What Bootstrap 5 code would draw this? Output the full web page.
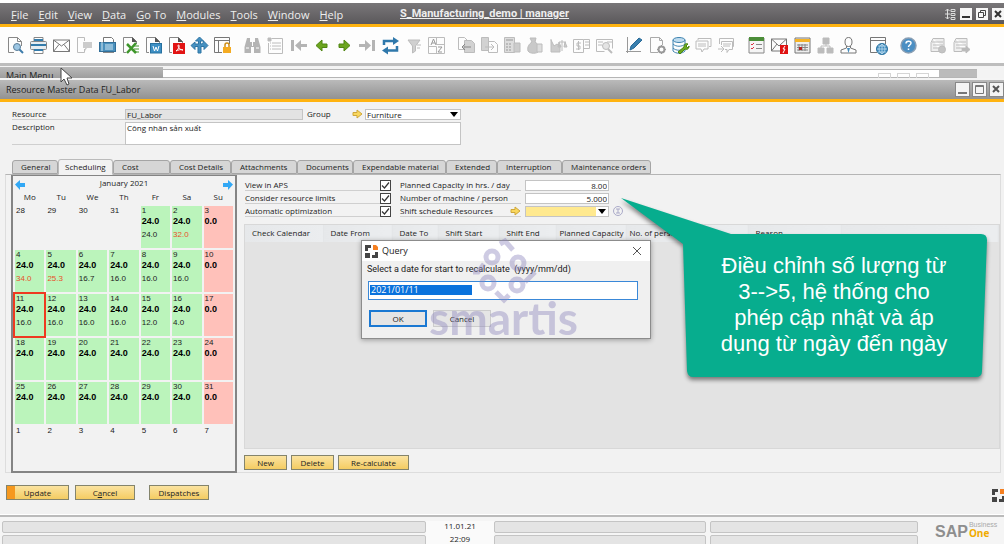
<!DOCTYPE html>
<html lang="vi">
<head>
<meta charset="utf-8">
<meta name="viewport" content="width=device-width, initial-scale=1">
<title>S_Manufacturing_demo | manager</title>
<link href="https://cdn.jsdelivr.net/npm/bootstrap@5.3.0/dist/css/bootstrap.min.css" rel="stylesheet">
<script defer src="https://cdn.jsdelivr.net/npm/bootstrap@5.3.0/dist/js/bootstrap.bundle.min.js"></script>
<style>
body{font:8px/10px "Open Sans","Noto Sans",sans-serif;color:#222;background:#fff;height:100vh;overflow:hidden}
a{color:inherit}
.menubar{height:21px;margin-top:3px;background:linear-gradient(#797779,#5b585b);color:#eee;font-size:11px;line-height:21px;box-sizing:content-box;border-bottom:3px solid #ffb310}
.menubar .left-menu{width:400px;padding-left:11px;gap:10px;padding-top:1px}
.menubar .left-menu a{text-decoration:none}
.menubar .left-menu a::first-letter{text-decoration:underline}
.app-name{font:bold 11px/21px Roboto,sans-serif;color:#eee}
.winbtn{width:12px;height:12px;padding:0;border:0;background:#f6f6f6;display:block;line-height:0}
.toolbar{height:36px;padding-left:7px;gap:13px;background:#fdfdfd}
.toolbar .tool-set{gap:6px}
.toolbar button{width:17px;height:17px;padding:0;border:0;background:none;line-height:0}
.toolbar svg{width:17px;height:17px;fill:none;stroke:#bcbcbc;overflow:visible}
.back-windows{height:17px;border-top:3px solid #bdbdbd;background:#f3f3f3;border-bottom:2px solid #f4f4f4;overflow:hidden}
.main-menu{width:163px;font-size:9px;line-height:18px;padding-left:6px;background:linear-gradient(#b9b9b9,#9b9b9b);height:12px;margin-top:1px;overflow:hidden}
.back-form{margin:3px 27px 0 0;border-top:1px solid #b5b5b5;border-bottom:1px solid #b5b5b5;gap:6px;padding:3px 0 0;background:linear-gradient(90deg,#fff 0 776px,#bbb 776px 814px,#f3f3f3 814px)}
.ghost{width:13px;height:12px;border:1px solid #d5d5d5}
.titlebar{height:22px;background:linear-gradient(#bababa,#929292);border-bottom:3px solid #ffb310;font-size:9px;padding-left:6px}
.titlebar .winbtn{width:15px;height:15px;border:1px solid #888;background:#f4f4f4}
.work{background:#f2f2f2;min-height:0}
.head-form{display:grid;grid-template-columns:113px 178px 49px 13px 96px;row-gap:2px;padding:7px 12px 0;height:57px;align-content:start}
.rule{border-bottom:1px solid #cfcfcf}
.field{font:inherit;line-height:9px;border:1px solid #c4c4c4;background:#fff;padding:0 1px;border-radius:0;color:#222;height:11px;min-width:0;display:block;outline:0}
textarea.field{height:23px;resize:none;overflow:hidden;grid-column:2/6}
.pick{position:relative;display:block}
.pick select{appearance:none;width:100%}
.pick svg{position:absolute;right:2px;top:3px;pointer-events:none}
.tabs{display:grid;grid-template-columns:46px 55px 57px 61px 66px 56px 93px 51px 65px 89px;padding-left:12px;border:0;height:15px;position:relative;z-index:1}
.tabs .nav-link{font:inherit;width:100%;height:14px;margin:1px 0 0;padding:0 0 2px 8px;text-align:left;line-height:11px;color:#222;background:#d6d6d6;border:1px solid #a5a5a5;border-radius:3px 3px 0 0;white-space:nowrap}
.tabs .nav-link.active{margin:0;height:16px;padding:0 0 2px 6px;background:#f2f2f2;border-color:#bbb;border-bottom-color:#f2f2f2;color:#222}
.panel{border:1px solid #ddd;border-top-color:#b5b5b5;margin:0 3px 0 5px;height:299px;padding:0 0 0 5px;gap:7px}
.calbox{width:226px;height:298px;border:2px solid #848484;border-top-width:1px;flex:none;padding-top:2px}
.calbox .cal-nav{height:12px;padding:0 2px;font-size:8px}
.calbox button{border:0;background:none;padding:0;line-height:0}
.days{width:100%;table-layout:fixed;border-collapse:separate;border-spacing:2px;font:8px/10px "Liberation Sans",sans-serif}
.days th{font:8px/10px "Open Sans",sans-serif;text-align:center;vertical-align:top;padding:0;height:12px}
.days td{height:42px;padding:0 1px;vertical-align:top}
.days b{display:block;font-size:9px;line-height:10px;color:#000}
.days i{display:block;font-style:normal;margin-top:3px;line-height:11px}
.days .work-day{background:#bbf4bb}
.days .free{background:#ffc1ba}
.days .over{color:#e8502a}
.days .today{outline:2px solid #ee3a20;outline-offset:0}
.options{display:grid;grid-template-columns:135px 20px 125px 84px 16px;grid-auto-rows:11px;row-gap:2px;padding:5px 0 0 1px}
.tick{appearance:none;width:11px;height:11px;border:1px solid #444;background:#fff;margin:0;display:block}
.tick:checked{background:#fff url("data:image/svg+xml,%3Csvg xmlns='http://www.w3.org/2000/svg' viewBox='0 0 9 9'%3E%3Cpath d='M1 4.500L3.500 7L8 1.500' fill='none' stroke='%23333' stroke-width='1.200'/%3E%3C/svg%3E")}
.gridbox{background:#e3e3e3;border:1px solid #d8d8d8;height:225px;margin-top:7px;overflow:hidden}
.shifts{table-layout:fixed;width:100%;border-collapse:collapse}
.shifts th{font-weight:400;line-height:10px;height:17px;padding:0 0 2px 7px;border-right:1px solid #e4e6e8;background:linear-gradient(90deg,#e6e8ea,#ebedef);white-space:nowrap}
.shifts .snug{padding-left:3px}
.row-actions{gap:4px;margin-top:6px}
.gold{font:inherit;height:15px;padding:0;border:1px solid #84846c;border-radius:0;background:linear-gradient(#fbe3a0,#f4cc62);color:#222;text-align:center;line-height:12px}
.primary-gold{background:linear-gradient(90deg,#f6981e 8px,transparent 8px),linear-gradient(#fbe3a0,#f4cc62)}
.form-actions{padding:12px 0 0 6px;gap:6px}
.statusbar{height:30px;border-top:1px solid #fff;background:#f5f5f5;box-shadow:inset 0 2px #bbb;padding:6px 0 0 2px;display:grid;grid-template-columns:424fr 68fr 212fr 4px 208fr 86px;overflow:hidden}
.statusbar .slot{height:12px;border:1px solid #c4c4c4;background:#e4e4e4;border-radius:2px;margin-bottom:2px}
.statusbar time{display:block;text-align:center;height:13px;line-height:10px}
.clock{background:#fafafa}
.query{position:absolute;left:361px;top:138px;width:290px;height:99px;background:#f0f0f0;border:1px solid #8c8c8c;box-shadow:0 1px 5px #0005;z-index:3}
.query header{background:#fff;height:20px;font-size:9px;padding:0 8px 0 3px}
.query label{font:9px/12px "Roboto",sans-serif;padding:2px 0 0 5px;display:block}
.query input{margin:6px 0 0 6px;width:270px;height:19px;border:1px solid #3a88d8;border-radius:0;background:linear-gradient(#0a72dc,#0a72dc) 1px 3px/102px 10px no-repeat #fff;color:#fff;padding:0 2px 2px;font:9px/12px "Open Sans",sans-serif;outline:0}
.query .choices{padding:10px 0 0 7px;gap:6px}
.query .choice{width:58px;height:17px;padding:0;border:1px solid #ccc;background:#e5e5e5;font:8px/13px "Open Sans",sans-serif;color:#222}
.query .choice.default-choice{border:2px solid #1a78d2}
.watermark{position:absolute;left:429px;top:136px;width:150px;z-index:4;color:#8d86bd;opacity:.42;pointer-events:none}
.watermark svg{overflow:visible}
.watermark span{display:block;font:700 46px/50px Lato,sans-serif}
.callout{position:absolute;left:621px;top:96px;width:366px;height:184px;z-index:5}
.callout svg{position:absolute;inset:0;overflow:visible;filter:drop-shadow(0 3px 2px #0007)}
.callout p{position:absolute;left:90px;top:55px;width:246px;margin:0;text-align:center;color:#fff;font:22px/26px "Liberation Sans",sans-serif;white-space:nowrap}
.pointer{position:absolute;left:60px;top:67px;z-index:9}
.sap{font-family:"Liberation Sans",sans-serif;padding-left:17px;gap:1px}
.sap strong{font-size:16px;line-height:22px;color:#8e8e8e}
.sap small{font-size:7px;line-height:8px;color:#aaa}
.sap small b{display:block;font:bold 10px/9px "Open Sans",sans-serif;color:#f0ab00}
.w43{width:43px}.w71{width:71px}.w60{width:60px}.w63{width:63px}
</style>
</head>
<body class="d-flex flex-column">
<nav class="menubar d-flex flex-shrink-0">
 <div class="left-menu d-flex">
  <a class="d-block" href="#">File</a><a class="d-block" href="#">Edit</a><a class="d-block" href="#">View</a><a class="d-block" href="#">Data</a><a class="d-block" href="#">Go To</a><a class="d-block" href="#">Modules</a><a class="d-block" href="#">Tools</a><a class="d-block" href="#">Window</a><a class="d-block" href="#">Help</a>
 </div>
 <a class="app-name" href="#">S_Manufacturing_demo | manager</a>
 <div class="ms-auto d-flex align-items-center gap-1">
  <svg width="11" height="12" fill="none" stroke="#ddd"><path d="M2.500 1v10M.5 3l2-2 2 2M.5 9l2 2 2-2M0 6h5M6 1.500h4v2H6zM6 5.500h4v2H6zM6 9.500h4v2H6z"/></svg>
  <button class="winbtn" aria-label="Minimize"><svg width="12" height="12"><path d="M2 8h8v2H2z" fill="#333"/></svg></button>
  <button class="winbtn" aria-label="Restore"><svg width="12" height="12" fill="none" stroke="#444"><path d="M4.500 4V2.500h5v5H8M2.500 4.500h5v5h-5z"/></svg></button>
  <button class="winbtn" aria-label="Close"><svg width="12" height="12" stroke="#333" stroke-width="2"><path d="M3 3l6 6M9 3l-6 6"/></svg></button>
 </div>
</nav>
<div class="toolbar d-flex align-items-center flex-shrink-0">
 <div class="tool-set d-flex">
  <button aria-label="Preview"><svg viewBox="0 0 17 17"><path d="M7 15.500H1.500V.5h9l4 4V9M10.500.5v4h4" stroke="#888"/><circle cx="10" cy="10" r="3.500" fill="#9dc7e4" stroke="#587c98"/><path d="M12.500 12.500l3.500 3.500" stroke="#3d7cab" stroke-width="2"/></svg></button>
  <button aria-label="Print"><svg viewBox="0 0 17 17"><path d="M4 5V.5h9V5M4 11v5.500h9V11" fill="#fff" stroke="#888"/><rect x=".5" y="4.500" width="16" height="8" rx="1" fill="#e8eef2" stroke="#888"/><path d="M1 7h15v2H1zM4 2h9v2H4zM4 12h9v2H4z" fill="#357cab" stroke="none"/></svg></button>
  <button aria-label="Mail"><svg viewBox="0 0 17 17"><path d="M.5 3h16v11.500H.5zM.5 3L8.500 9l8-6M.5 14.500L6 7.500M16.500 14.500L11 7.500" stroke="#777"/></svg></button>
  <button aria-label="SMS"><svg viewBox="0 0 17 17"><path d="M8.500 4V.5h-7v15h7V12"/><path d="M7 5h9v6h-5l-2 3v-3H7z" fill="#ccc" stroke="none"/></svg></button>
  <button aria-label="Fax"><svg viewBox="0 0 17 17"><path d="M4.500 5V.5h8l2 2V5" fill="#fff" stroke="#777"/><rect x=".5" y="5.500" width="16" height="9" fill="#4b91bd" stroke="#326f99"/><path d="M3 5v9M6 8h8M6 10h8M6 12h8" stroke="#d3e8f4"/><path d="M4 15.500h11" stroke="#888"/></svg></button>
  <button aria-label="Export to Excel"><svg viewBox="0 0 17 17"><path d="M4 15.500H1.500V.5h9l4 4V7" stroke="#888"/><path d="M10 0v5h5z" fill="#555" stroke="none"/><path d="M5 7l9 9M14 6l-9 10" stroke="#3e962b" stroke-width="2.500"/><path d="M12 9h5M12 12h5M12 15h5" stroke="#3e962b"/></svg></button>
  <button aria-label="Export to Word"><svg viewBox="0 0 17 17"><path d="M4 15.500H1.500V.5h9l4 4V7" stroke="#888"/><path d="M10 0v5h5z" fill="#555" stroke="none"/><rect x="5.500" y="6.500" width="11" height="9.500" fill="#3d8fc4" stroke="#26709f"/><path d="M8 9l1.500 5 1.500-4 1.500 4L14 9" stroke="#fff"/></svg></button>
  <button aria-label="Export to PDF"><svg viewBox="0 0 17 17"><path d="M4 15.500H1.500V.5h9l4 4V7" stroke="#888"/><path d="M10 0v5h5z" fill="#555" stroke="none"/><path d="M5 6h12v11H5z" fill="#e21414" stroke="none"/><path d="M8 14c3-2 4-6 2.500-6S11 13 15 13c-2-1-5 0-7 1" stroke="#fff"/></svg></button>
  <button aria-label="Launch application"><svg viewBox="0 0 17 17"><path d="M8.500 0l4 4h-3v3c2 0 3-1 3-3l4.500 4.500-4 4v-3H10v6.500H7V9.500H4v3l-4-4L4 5v2h3.500V4h-3z" fill="#4590c0" stroke="#2d74a4"/></svg></button>
  <button aria-label="Lock screen"><svg viewBox="0 0 17 17"><path d="M8 15.500H.5V.5h15V7M.5 3.500h15M4.500 4v11" stroke="#777"/><path d="M11 10V8a2 2 0 014 0v2" stroke="#ce8d16" stroke-width="1.500"/><path d="M9 10h8v6H9z" fill="#f4ab22" stroke="none"/></svg></button>
 </div>
 <div class="tool-set d-flex">
  <button aria-label="Find"><svg viewBox="0 0 17 17"><path d="M3 1h3v4h5V1h3l2.500 9v6H10v-6H7v6H.5v-6z" fill="#b4b4b4" stroke="none"/><path d="M2 11h3M12 11h3M8.500 5v4" stroke="#fff"/></svg></button>
  <button aria-label="Add"><svg viewBox="0 0 17 17"><path d="M4.500 1.500h11v15h-14V6M5 6h9M5 9h9M5 12h9M3 6h1M3 9h1M3 12h1"/><path d="M1 1h3v3H1z" fill="#bbb"/></svg></button>
  <button aria-label="First record"><svg viewBox="0 0 17 17"><path d="M1 3h3v11H1zM17 7v3h-6v4L5 8.500 11 3v4z" fill="#b4b4b4" stroke="none"/></svg></button>
  <button aria-label="Previous record"><svg viewBox="0 0 17 17"><path d="M14 7v3.500H9V14L3 8.500 9 3v4z" fill="#6ca51f" stroke="#4f8510"/></svg></button>
  <button aria-label="Next record"><svg viewBox="0 0 17 17"><path d="M3 7v3.500h5V14l6-5.500L8 3v4z" fill="#6ca51f" stroke="#4f8510"/></svg></button>
  <button aria-label="Last record"><svg viewBox="0 0 17 17"><path d="M13 3h3v11h-3zM0 7v3h6v4l6-5.500L6 3v4z" fill="#b4b4b4" stroke="none"/></svg></button>
  <button aria-label="Refresh"><svg viewBox="0 0 17 17"><path d="M2 8V4h10M15 9v4.500H5" stroke="#2f78ab" stroke-width="2.500"/><path d="M11 0l6 4-6 4zM6 9.500v8l-6-4z" fill="#2f78ab" stroke="none"/></svg></button>
  <button aria-label="Filter"><svg viewBox="0 0 17 17"><path d="M3 3h12l-4.500 6v5l-3 2V9z" fill="#d0d0d0"/><path d="M12 8h4M12 11h3"/></svg></button>
  <button aria-label="Sort"><svg viewBox="0 0 17 17"><path d="M.5.5h16v16H.5zM8.500.5v7h8M.5 9.500h8v7"/><path d="M3 8l2.500-6L8 8M4 6h3M10 10h4l-4 5h4" stroke="#999"/></svg></button>
 </div>
 <div class="tool-set d-flex">
  <button aria-label="Base document"><svg viewBox="0 0 17 17"><path d="M8 12.500H.5V.5h6l3 3V5"/><path d="M6.500 3.500h7l3 3v9h-10z" fill="#d2d2d2"/><path d="M13 10H4M7 7l-3 3 3 3" stroke="#888"/></svg></button>
  <button aria-label="Target document"><svg viewBox="0 0 17 17"><path d="M.5.500h7v13h-7z" fill="#d2d2d2"/><path d="M7.500 4.500h6l3 3v8h-9zM4 10h9M10 7l3 3-3 3"/></svg></button>
  <button aria-label="Gross profit"><svg viewBox="0 0 17 17"><path d="M.5.5h10v15H.5z" fill="#ddd"/><path d="M2 3h7M2 7h2M5 7h2M2 10h2M5 10h2M2 13h2M5 13h2" stroke="#999"/><path d="M10 6h6v9h-6z" fill="#ccc"/></svg></button>
  <button aria-label="Payment means"><svg viewBox="0 0 17 17"><path d="M5 5L3 1h6L8 5c3 2 5 5 4 9-2 3-9 3-11 0-1-4 1-7 4-9z" fill="#c9c9c9"/><path d="M10 7h5v8h-5z" fill="#ddd"/></svg></button>
  <button aria-label="Volume and weight"><svg viewBox="0 0 17 17"><path d="M1 2v13h9V9L7 7 4 9 1 3M12 3v11M9 5h7M9 5l-1 5h3zM15 5l-1 5h3z" fill="#ccc"/></svg></button>
  <button aria-label="Transaction journal"><svg viewBox="0 0 17 17"><path d="M.5 2.500h10v13H.5zM10.500 2.500h6v9h-6M5.500 4v9M8 6H4v3h3v3H3M12 5h4M12 8h4"/></svg></button>
  <button aria-label="Cost preview"><svg viewBox="0 0 17 17"><path d="M.5 2.500h16v9M.5 2.500v12h8M2 5h5M2 8h4M11 5h5"/><circle cx="10" cy="9" r="3.500" fill="#e4e4e4"/><path d="M12 12l4 4" stroke-width="2"/></svg></button>
 </div>
 <div class="tool-set d-flex">
  <button aria-label="Edit layout"><svg viewBox="0 0 17 17"><path d="M1.500 0v16M0 14.500h15" stroke="#999"/><path d="M4 13l1-4 8-8 3 2-8 8z" fill="#397fae" stroke="#286a98"/></svg></button>
  <button aria-label="Form settings"><svg viewBox="0 0 17 17"><path d="M9 15.500H1.500V.5h9l3 3V8M10.500.5v3h3" stroke="#aaa"/><circle cx="12.500" cy="12.500" r="3" stroke="#999" stroke-width="2"/><path d="M12.500 8v2M12.500 15v2M8 12.500h2M15 12.500h2" stroke="#999"/></svg></button>
  <button aria-label="Query manager"><svg viewBox="0 0 17 17"><ellipse cx="7" cy="3" rx="6" ry="2.500" fill="#bfdcef" stroke="#3e83b0"/><path d="M1 3v11c3 3 9 3 12 0V3M1 7c3 3 9 3 12 0M1 11c3 3 9 3 12 0" stroke="#3e83b0"/><path d="M6 15l6-5c0-3 2-4 4-3l-2 2 2 2 1-2c0 3-2 4-4 3l-5 5z" fill="#6eaa20" stroke="#498513"/></svg></button>
  <button aria-label="Messages"><svg viewBox="0 0 17 17"><path d="M3 3V1.500h13v8h-2M1 4h12v8H9l-2 3-1-3H1zM3 7h8M3 9h8"/></svg></button>
  <button aria-label="Activities"><svg viewBox="0 0 17 17"><path d="M1.500 7V1.500h14v8H14M3.500 8V4.500h11v8H11l-2 3v-3H7M5 7h8M5 9h7M0 12h6M3 9l3 3-3 3"/></svg></button>
 </div>
 <div class="tool-set d-flex">
  <button aria-label="My activities"><svg viewBox="0 0 17 17"><path d="M1 1h15v15H1z" stroke="#888" fill="#f5f5f5"/><path d="M1 0h15v4H1z" fill="#4c8e39" stroke="none"/><path d="M3 7l1 1 2-2M3 11l1 1 2-2" stroke="#d34"/><path d="M8 7.500h6M8 11.500h6" stroke="#888"/></svg></button>
  <button aria-label="Alerts"><svg viewBox="0 0 17 17"><path d="M.5 2h15v12H.5zM.5 2l7.500 7 7.500-7M.5 14L6 7" stroke="#777"/><path d="M9 8h8v9H9z" fill="#e01212" stroke="none"/><path d="M14 9l-2 3h2l-2 4" stroke="#fff"/></svg></button>
  <button aria-label="Calendar"><svg viewBox="0 0 17 17"><path d="M1 1h15v15H1z" fill="#eee" stroke="#777"/><path d="M1 2h15v3H1z" fill="#f5b427" stroke="none"/><path d="M3 8h11M3 10.500h11M3 13h11M5 7v7M8 7v7M11 7v7" stroke="#888"/><path d="M5 10h3v3H5z" fill="#b52323" stroke="none"/></svg></button>
  <button aria-label="Organization"><svg viewBox="0 0 17 17"><path d="M6 1h6v6H6zM1 11h6v5H1zM10 11h6v5h-6z" fill="#bcbcbc"/><path d="M4 11V9h9v2M9 7v2"/></svg></button>
  <button aria-label="Contacts"><svg viewBox="0 0 17 17"><ellipse cx="8.500" cy="5" rx="3.500" ry="4.500" stroke="#777"/><path d="M6.500 9v2L1 13v3h15v-3l-5.500-2V9" stroke="#777"/><path d="M7 11h3l-1.500 5z" fill="#438bbb" stroke="none"/></svg></button>
 </div>
 <div class="tool-set d-flex"><button aria-label="Web browser"><svg viewBox="0 0 17 17"><path d="M7 15.500H.5V.5h15V7M.5 3.500h15" stroke="#777"/><circle cx="12" cy="12" r="5.500" fill="#3f8bbd" stroke="#28719f"/><path d="M12 7v10M7 12h10M8 9h8M8 15h8M12 7c-4 3-4 7 0 10M12 7c4 3 4 7 0 10" stroke="#cde6f5" stroke-width=".7"/></svg></button></div>
 <div class="tool-set d-flex"><button aria-label="Help"><svg viewBox="0 0 17 17"><circle cx="8.500" cy="8.500" r="7.500" fill="#4c8fc3" stroke="#8a9fb4" stroke-width="1.500"/><path d="M6 6.500c0-3 5-3 5-.5 0 2-2.500 2-2.500 4M8.500 11.500v1.500" stroke="#fff" stroke-width="1.500"/></svg></button></div>
 <div class="tool-set d-flex">
  <button aria-label="Start recording"><svg viewBox="0 0 17 17"><path d="M3 1.500h11v9M3 1.500l-2 4v9h8M2 5h11M3 8h10M3 11h6" fill="#eee"/><circle cx="12" cy="12.500" r="3.500" fill="#c4c4c4"/></svg></button>
  <button aria-label="Replay recording"><svg viewBox="0 0 17 17"><path d="M3 1.500h11v9M3 1.500l-2 4v9h8M2 5h11M3 8h10M3 11h6" fill="#eee"/><path d="M9 11h4V9l4 3.500-4 3.500v-2H9z" fill="#bbb"/></svg></button>
 </div>
</div>
<div class="back-windows d-flex flex-shrink-0">
 <div class="main-menu">Main Menu</div>
 <div class="back-form flex-grow-1 d-flex justify-content-end pe-5"><span class="ghost"></span><span class="ghost"></span><span class="ghost"></span></div>
</div>
<div class="titlebar d-flex align-items-center flex-shrink-0">
 <span>Resource Master Data FU_Labor</span>
 <div class="ms-auto d-flex" style="gap:2px">
  <button class="winbtn" aria-label="Minimize form"><svg width="13" height="13"><path d="M2 9h9v2H2z" fill="#777"/></svg></button>
  <button class="winbtn" aria-label="Maximize form"><svg width="13" height="13" fill="none" stroke="#777"><path d="M2.500 2.500h8v8h-8zM2 3.500h8"/></svg></button>
  <button class="winbtn" aria-label="Close form"><svg width="13" height="13" stroke="#555" stroke-width="2"><path d="M3 3l6 6M9 3l-6 6"/></svg></button>
 </div>
</div>
<main class="work flex-grow-1 position-relative">
 <form class="head-form">
  <label class="rule" for="res">Resource</label>
  <input class="field" id="res" value="FU_Labor" style="background:#e3e3e3">
  <label class="ps-1" for="grp">Group</label>
  <svg width="11" height="10"><path d="M1 3.500h4V1l5 4-5 4V6.500H1z" fill="#f9d75e" stroke="#cfa73a"/></svg>
  <span class="pick"><select class="field" id="grp"><option>Furniture</option></select><svg width="9" height="5"><path d="M0 0h8L4 5z"/></svg></span>
  <label class="rule" for="desc">Description</label>
  <textarea class="field" id="desc">Công nhân sản xuất</textarea>
 </form>
 <ul class="nav nav-tabs tabs">
  <li><button class="nav-link">General</button></li><li><button class="nav-link active">Scheduling</button></li><li><button class="nav-link">Cost</button></li><li><button class="nav-link">Cost Details</button></li><li><button class="nav-link">Attachments</button></li><li><button class="nav-link">Documents</button></li><li><button class="nav-link">Expendable material</button></li><li><button class="nav-link">Extended</button></li><li><button class="nav-link">Interruption</button></li><li><button class="nav-link">Maintenance orders</button></li>
 </ul>
 <section class="panel d-flex">
  <div class="calbox">
   <div class="cal-nav d-flex justify-content-between">
    <button aria-label="Previous month"><svg width="10" height="11"><path d="M0 5.500L5 1v3h5v4H5v3z" fill="#32a8f5"/></svg></button>
    <span>January 2021</span>
    <button aria-label="Next month"><svg width="10" height="11"><path d="M10 5.500L5 1v3H0v4h5v3z" fill="#32a8f5"/></svg></button>
   </div>
   <table class="days">
    <thead><tr><th>Mo</th><th>Tu</th><th>We</th><th>Th</th><th>Fr</th><th>Sa</th><th>Su</th></tr></thead>
    <tbody>
    <tr><td>28</td><td>29</td><td>30</td><td>31</td><td class="work-day">1<b>24.0</b><i>24.0</i></td><td class="work-day">2<b>24.0</b><i class="over">32.0</i></td><td class="free">3<b>0.0</b></td></tr>
    <tr><td class="work-day">4<b>24.0</b><i class="over">34.0</i></td><td class="work-day">5<b>24.0</b><i class="over">25.3</i></td><td class="work-day">6<b>24.0</b><i>16.7</i></td><td class="work-day">7<b>24.0</b><i>16.0</i></td><td class="work-day">8<b>24.0</b><i>16.0</i></td><td class="work-day">9<b>24.0</b><i>16.0</i></td><td class="free">10<b>0.0</b></td></tr>
    <tr><td class="work-day today">11<b>24.0</b><i>16.0</i></td><td class="work-day">12<b>24.0</b><i>16.0</i></td><td class="work-day">13<b>24.0</b><i>16.0</i></td><td class="work-day">14<b>24.0</b><i>16.0</i></td><td class="work-day">15<b>24.0</b><i>12.0</i></td><td class="work-day">16<b>24.0</b><i>4.0</i></td><td class="free">17<b>0.0</b></td></tr>
    <tr><td class="work-day">18<b>24.0</b></td><td class="work-day">19<b>24.0</b></td><td class="work-day">20<b>24.0</b></td><td class="work-day">21<b>24.0</b></td><td class="work-day">22<b>24.0</b></td><td class="work-day">23<b>24.0</b></td><td class="free">24<b>0.0</b></td></tr>
    <tr><td class="work-day">25<b>24.0</b></td><td class="work-day">26<b>24.0</b></td><td class="work-day">27<b>24.0</b></td><td class="work-day">28<b>24.0</b></td><td class="work-day">29<b>24.0</b></td><td class="work-day">30<b>24.0</b></td><td class="free">31<b>0.0</b></td></tr>
    <tr><td>1</td><td>2</td><td>3</td><td>4</td><td>5</td><td>6</td><td>7</td></tr>
    </tbody>
   </table>
  </div>
  <div class="flex-grow-1">
   <div class="options">
    <label class="rule" for="aps">View in APS</label><input class="tick" type="checkbox" id="aps" checked><label class="rule me-1" for="cap">Planned Capacity in hrs. / day</label><input class="field text-end" id="cap" value="8.00"><span></span>
    <label class="rule" for="lim">Consider resource limits</label><input class="tick" type="checkbox" id="lim" checked><label class="rule me-1" for="num">Number of machine / person</label><input class="field text-end" id="num" value="5.000"><span></span>
    <label class="rule" for="opt">Automatic optimization</label><input class="tick" type="checkbox" id="opt" checked>
    <span class="rule me-1 d-flex justify-content-between"><label for="shift">Shift schedule Resources</label><svg width="11" height="10"><path d="M1 3.500h4V1l5 4-5 4V6.500H1z" fill="#f9d75e" stroke="#cfa73a"/></svg></span>
    <span class="pick"><select class="field" id="shift" style="background:linear-gradient(90deg,#ffe98f 70px,#fff 70px)"><option></option></select><svg width="9" height="5"><path d="M0 0h8L4 5z"/></svg></span>
    <svg class="ms-1" width="10" height="10" fill="none" stroke="#aaaac8"><circle cx="5" cy="5" r="4.500"/><path d="M3 3h4M3 7h4M5 3v4"/></svg>
   </div>
   <div class="gridbox">
    <table class="shifts">
     <colgroup><col style="width:78px"><col style="width:69px"><col style="width:46px"><col style="width:61px"><col style="width:57px"><col style="width:70px"><col style="width:122px"><col style="width:93px"><col></colgroup>
     <thead><tr><th>Check Calendar</th><th>Date From</th><th>Date To</th><th>Shift Start</th><th>Shift End</th><th class="snug">Planned Capacity</th><th class="snug">No. of persons</th><th>Reason</th><th></th></tr></thead>
    </table>
   </div>
   <div class="row-actions d-flex"><button class="gold w43">New</button><button class="gold w43">Delete</button><button class="gold w71">Re-calculate</button></div>
  </div>
 </section>
 <div class="form-actions d-flex">
  <button class="gold primary-gold w63">Update</button><button class="gold w60">C<u>a</u>ncel</button><button class="gold w60 ms-2">Dispatches</button>
  <svg class="ms-auto mt-1" width="12" height="13"><path d="M0 0h6v3H3v3H0zM0 8h5v5H0zM7 10h3V7h2v6H7z" fill="#454545"/><path d="M8 0h4v5H8z" fill="#f57f20"/></svg>
 </div>

 <div class="query" role="dialog" aria-label="Query">
  <header class="d-flex align-items-center"><svg width="13" height="13"><path d="M0 0h6v3H3v3H0zM0 8h5v5H0zM7 10h3V7h3v6H7z" fill="#454545"/><path d="M8 0h3l2 2v3H8z" fill="#f57f20"/></svg><span class="ms-1">Query</span><button class="border-0 bg-transparent p-0 ms-auto" aria-label="Close query"><svg class="d-block" width="10" height="10" stroke="#555"><path d="M1 1l8 8M9 1l-8 8"/></svg></button></header>
  <label for="qd">Select a date for start to recalculate &nbsp;(yyyy/mm/dd)</label>
  <input id="qd" value="2021/01/11">
  <div class="choices d-flex"><button class="choice default-choice">OK</button><button class="choice">Cancel</button></div>
 </div>
 <div class="watermark" aria-hidden="true">
  <svg class="d-block" width="150" height="55" fill="none" stroke="currentColor" stroke-width="5"><circle cx="63" cy="19" r="6"/><circle cx="89" cy="25" r="6"/><circle cx="59" cy="45" r="6"/><circle cx="88" cy="47" r="6"/><path d="M71 6l5-3 8 9M44 34h5l6-8M96 44l10-10M67 54l8 8 5-5"/></svg>
  <span>smartis</span>
 </div>
 <aside class="callout"><svg width="366" height="184"><path d="M0 0L110 36H360q6 0 6 6L361 173q0 6-6 6H72q-5 0-6-6L62 46z" fill="#07ad8e"/></svg><p>Điều chỉnh số lượng từ<br>3--&gt;5, hệ thống cho<br>phép cập nhật và áp<br>dụng từ ngày đến ngày</p></aside>
</main>
<footer class="statusbar flex-shrink-0">
 <div><div class="slot"></div><div class="slot"></div></div>
 <div class="clock"><time>11.01.21</time><time>22:09</time></div>
 <div><div class="slot"></div><div class="slot"></div></div><span></span>
 <div><div class="slot"></div><div class="slot"></div></div>
 <div class="sap d-flex"><strong>SAP</strong><small>Business<b>One</b></small></div>
</footer>
<svg class="pointer" width="13" height="19"><path d="M1 1v14l3-3 3 6 2-1-2-6h5z" fill="#fff" stroke="#444"/></svg>
</body>
</html>
